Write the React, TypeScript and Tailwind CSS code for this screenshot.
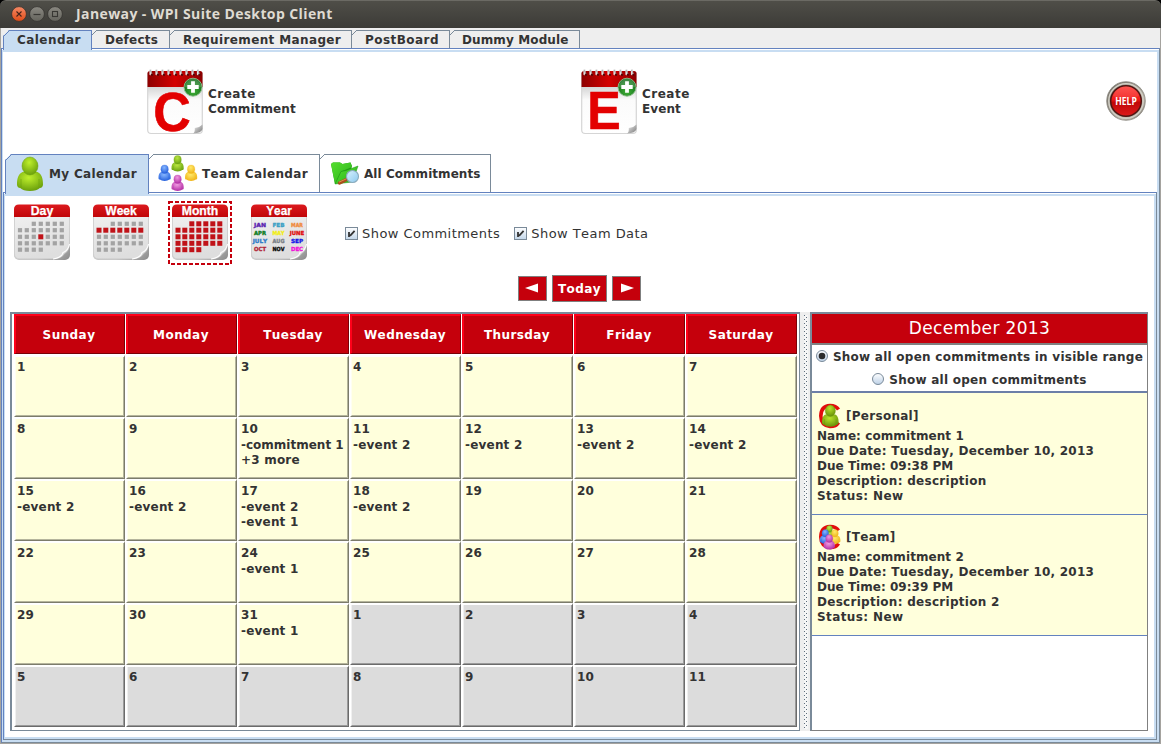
import React from "react";

const days = ["Sunday", "Monday", "Tuesday", "Wednesday", "Thursday", "Friday", "Saturday"];

const events: Record<number, string[]> = {
  9: ["-commitment 1", "+3 more"],
  10: ["-event 2"],
  11: ["-event 2"],
  12: ["-event 2"],
  13: ["-event 2"],
  14: ["-event 2"],
  15: ["-event 2"],
  16: ["-event 2", "-event 1"],
  17: ["-event 2"],
  23: ["-event 1"],
  30: ["-event 1"],
};

const cells = Array.from({ length: 42 }, (_, i) => ({
  label: i < 31 ? i + 1 : i - 30,
  current: i < 31,
  lines: events[i] ?? [],
}));

function WindowButton({ kind }: { kind: "close" | "min" | "max" }) {
  const close = kind === "close";
  return (
    <svg width="16" height="16" viewBox="0 0 16 16">
      <defs>
        <linearGradient id={"wb" + kind} x1="0" y1="0" x2="0" y2="1">
          <stop offset="0" stopColor={close ? "#f58a66" : "#8a8881"} />
          <stop offset="1" stopColor={close ? "#df4b17" : "#64635c"} />
        </linearGradient>
      </defs>
      <circle cx="8" cy="8" r="7.4" fill={`url(#wb${kind})`} stroke="#33322e" strokeWidth="0.8" />
      {kind === "close" && <path d="M5.500 5.500l5 5M10.500 5.500l-5 5" stroke="#45231a" strokeWidth="1.100" />}
      {kind === "min" && <path d="M4.500 8.500h7" stroke="#383733" strokeWidth="1.200" />}
      {kind === "max" && <rect x="5.500" y="5.500" width="5" height="5" fill="none" stroke="#383733" strokeWidth="1.100" />}
    </svg>
  );
}

function CreateIcon({ letter }: { letter: string }) {
  const id = "ci" + letter;
  return (
    <svg width="56" height="66" viewBox="0 0 56 66" className="overflow-visible">
      <defs>
        <linearGradient id={id + "r"} x1="0" x2="1">
          <stop offset="0" stopColor="#8d0000" />
          <stop offset="0.5" stopColor="#d40000" />
          <stop offset="1" stopColor="#8d0000" />
        </linearGradient>
        <linearGradient id={id + "w"} x1="0" y1="0" x2="0" y2="1">
          <stop offset="0.2" stopColor="#d0d0d0" />
          <stop offset="0.45" stopColor="#fbfbfb" />
          <stop offset="1" stopColor="#ffffff" />
        </linearGradient>
        <linearGradient id={id + "c"} x1="0" y1="0" x2="1" y2="1">
          <stop offset="0" stopColor="#ffffff" />
          <stop offset="0.5" stopColor="#b5b5b5" />
          <stop offset="1" stopColor="#777" />
        </linearGradient>
        <radialGradient id={id + "g"} cx="0.5" cy="0.75" r="0.7">
          <stop offset="0" stopColor="#3fae35" />
          <stop offset="1" stopColor="#106a1a" />
        </radialGradient>
      </defs>
      <path d="M0.700 4H55.300V61q0 3.500-3.500 3.500H4.200q-3.500 0-3.500-3.500z" fill={`url(#${id}w)`} stroke="#d5d5d5" strokeWidth="1.200" />
      <path d="M0.500 18V4.500q0-2.500 2.500-2.500H53q2.500 0 2.500 2.500V18z" fill={`url(#${id}r)`} />
      {[4, 10, 16, 22, 28, 34, 40, 46, 51.500].map((x) => (
        <g key={x}>
          <path d={`M${x - 0.500} 1.200v4`} stroke="#e2e2e2" strokeWidth="2.200" strokeLinecap="round" />
          <circle cx={x + 1} cy="5.700" r="1.200" fill="#5c0808" />
          <path d={`M${x - 1} 1l2 4`} stroke="#9a9a9a" strokeWidth="0.800" />
        </g>
      ))}
      <path d="M46 64.500q2-1 1.800-5.500q5-.5 7.700-3.500V60q-1 4-9.500 4.500z" fill={`url(#${id}c)`} />
      <text
        x={letter === "C" ? 25 : 23}
        y={letter === "C" ? 61.5 : 60}
        textAnchor="middle"
        fontFamily="Liberation Sans, sans-serif"
        fontWeight="700"
        fontSize={letter === "C" ? 56 : 54}
        textLength={letter === "C" ? 37.5 : 33.5}
        lengthAdjust="spacingAndGlyphs"
        fill="#e30000"
        stroke="#e30000"
        strokeWidth="0.600"
      >
        {letter}
      </text>
      <circle cx="46" cy="18.200" r="9" fill={`url(#${id}g)`} stroke="#8fbd8c" strokeWidth="0.900" />
      <path d="M37.800 18a8.200 8.200 0 0 1 16.400 0q-8 2-16.400 0z" fill="#fff" opacity="0.180" />
      <path d="M46 12.300v11.400M40.300 18h11.400" stroke="#fff" strokeWidth="3.800" />
    </svg>
  );
}

function HelpIcon() {
  return (
    <svg width="40" height="40" viewBox="0 0 40 40">
      <defs>
        <linearGradient id="hm" x1="0" y1="0" x2="1" y2="1">
          <stop offset="0" stopColor="#69665f" />
          <stop offset="0.350" stopColor="#8d897f" />
          <stop offset="0.700" stopColor="#b9b5aa" />
          <stop offset="1" stopColor="#77736c" />
        </linearGradient>
        <linearGradient id="hr" x1="0" y1="0" x2="0" y2="1">
          <stop offset="0" stopColor="#ff4a44" />
          <stop offset="0.450" stopColor="#ee1a18" />
          <stop offset="0.550" stopColor="#c00808" />
          <stop offset="1" stopColor="#dd1b1b" />
        </linearGradient>
      </defs>
      <circle cx="20" cy="20" r="19.300" fill="url(#hm)" stroke="#8c8880" strokeWidth="0.800" />
      <circle cx="20" cy="20" r="17.200" fill="none" stroke="#d2cfc5" strokeWidth="1.500" />
      <circle cx="20" cy="20" r="15.300" fill="url(#hr)" stroke="#4f1512" strokeWidth="1.500" />
      <path d="M7 15a13.500 13.500 0 0 1 26 0q-13 6-26 0z" fill="#ff7777" opacity="0.250" />
      <text x="20" y="24" textAnchor="middle" fontFamily="Open Sans, sans-serif" fontWeight="700" fontSize="10" textLength="21.500" lengthAdjust="spacingAndGlyphs" fill="#fff">
        HELP
      </text>
    </svg>
  );
}

function PersonShape({ x, y, s, light, dark, id }: { x: number; y: number; s: number; light: string; dark: string; id: string }) {
  return (
    <g transform={`translate(${x} ${y}) scale(${s})`}>
      <defs>
        <radialGradient id={id} cx="0.45" cy="0.3" r="0.7">
          <stop offset="0" stopColor={light} />
          <stop offset="1" stopColor={dark} />
        </radialGradient>
      </defs>
      <path d="M5.500 15C1 17 0 22 0 27.500c0 2 1.200 3.300 3.200 3.500C5 33 8.500 34 13 34s8-1 9.800-3c2-.2 3.200-1.500 3.200-3.500C26 22 25 17 20.500 15z" fill={`url(#${id})`} />
      <path d="M4 22v8.500M22 22v8.500" stroke={dark} strokeWidth="0.800" opacity="0.700" />
      <ellipse cx="13" cy="9" rx="8" ry="9" fill={`url(#${id})`} stroke={dark} strokeWidth="0.500" />
    </g>
  );
}

function MyIcon() {
  return (
    <svg width="28" height="36" viewBox="0 0 28 36" className="-mt-px">
      <PersonShape id="me" x={1} y={1} s={1} light="#bff02c" dark="#6ba00c" />
    </svg>
  );
}

function TeamIcon() {
  return (
    <svg width="40" height="38" viewBox="0 0 40 38" className="-mt-px">
      <PersonShape id="tg" x={13.500} y={1.500} s={0.47} light="#b9e640" dark="#6aa212" />
      <PersonShape id="tb" x={0.500} y={11} s={0.47} light="#86b6ff" dark="#2560dc" />
      <PersonShape id="ty" x={27} y={11} s={0.47} light="#ffe96a" dark="#f0b418" />
      <PersonShape id="tp" x={13.500} y={21} s={0.47} light="#f09ae0" dark="#b32fa6" />
    </svg>
  );
}

function FolderIcon() {
  return (
    <svg width="30" height="26" viewBox="0 0 30 26">
      <defs>
        <linearGradient id="fg" x1="0" y1="0" x2="1" y2="1">
          <stop offset="0" stopColor="#55df2e" />
          <stop offset="1" stopColor="#2bb01c" />
        </linearGradient>
        <linearGradient id="fl" x1="0" y1="0" x2="1" y2="1">
          <stop offset="0" stopColor="#d9f2ff" />
          <stop offset="1" stopColor="#8cc9ee" />
        </linearGradient>
      </defs>
      <path d="M1 3l2-1.500h7L12.500 3l8-1.500L22 5l-3 12L5 23z" fill="#239f16" />
      <path d="M1 3l2-1.500h7L12.500 3l8-1.500L22 6 11 10.500 5 23z" fill="url(#fg)" />
      <path d="M11 10.500l5-1L28 5l-5.500 16-17.500 2z" fill="url(#fg)" stroke="#1b9414" strokeWidth="0.500" />
      <path d="M9.500 22l7-3.500" stroke="#a94e1c" strokeWidth="3.400" strokeLinecap="round" />
      <path d="M9 21.200l7-3.200" stroke="#e38a4c" strokeWidth="1" />
      <circle cx="22.500" cy="15.500" r="6" fill="url(#fl)" stroke="#8babbd" strokeWidth="1.100" />
    </svg>
  );
}

const colX = [6, 12.8, 19.8, 26.8, 33.8, 40.8, 47.8];
const rowY = [19.8, 26.2, 32.8, 39.3, 45.7];

const months: [string, string][] = [
  ["JAN", "#5a1fb0"], ["FEB", "#3b9fc4"], ["MAR", "#f08a3c"],
  ["APR", "#0a7a1c"], ["MAY", "#f2ee10"], ["JUNE", "#e01010"],
  ["JULY", "#2f7cc8"], ["AUG", "#7b7f86"], ["SEP", "#1212e8"],
  ["OCT", "#b02436"], ["NOV", "#080808"], ["DEC", "#f012d8"],
];

function ViewIcon({ label }: { label: "Day" | "Week" | "Month" | "Year" }) {
  const id = "vi" + label;
  const isRed = (r: number, c: number) =>
    label === "Month" || (label === "Week" && r === 1) || (label === "Day" && r === 2 && c === 3);
  return (
    <svg width="56" height="57" viewBox="0 0 56 57">
      <defs>
        <linearGradient id={id} x1="0" y1="0" x2="0.300" y2="1">
          <stop offset="0" stopColor="#f0f0f0" />
          <stop offset="1" stopColor="#dedede" />
        </linearGradient>
        <linearGradient id={id + "r"} x1="0" y1="0" x2="0" y2="1">
          <stop offset="0" stopColor="#dc1a1e" />
          <stop offset="1" stopColor="#c00508" />
        </linearGradient>
        <linearGradient id={id + "s"} x1="0.700" y1="0.700" x2="1" y2="1">
          <stop offset="0" stopColor="#c6c6c6" />
          <stop offset="1" stopColor="#8a8a8a" />
        </linearGradient>
      </defs>
      <rect x="0" y="1" width="56" height="55" rx="5" fill={`url(#${id}s)`} />
      <path d="M0.500 10H55.500V41Q54.500 47.500 50.500 49.500Q48 54 41 54.800H5.500Q.5 54.500 .5 50z" fill={`url(#${id})`} stroke="#cfcfcf" strokeWidth="0.700" />
      <path d="M39 55Q48 53.500 49 48.500Q54 47 55.500 40" fill="none" stroke="#fff" strokeWidth="1.100" />
      <path d="M0 13V5.500Q0 .5 5 .5H51q5 0 5 5V13z" fill={`url(#${id}r)`} />
      <text x="28" y="10.600" textAnchor="middle" fontFamily="Liberation Sans, sans-serif" fontWeight="700" fontSize="12" fill="#fff" stroke="#fff" strokeWidth="0.250"
        textLength={label === "Month" ? 36.5 : label === "Week" ? 31.5 : label === "Year" ? 25.5 : 22.5} lengthAdjust="spacingAndGlyphs">
        {label}
      </text>
      {label !== "Year" &&
        rowY.map((y, r) =>
          colX.map((x, c) => {
            if ((r === 0 && c < 2) || (r === 4 && c > 3)) return null;
            const red = isRed(r, c);
            const w = red ? 5 : 4.2;
            return (
              <rect key={`${r}-${c}`} x={x - w / 2} y={y - w / 2} width={w} height={w} fill={red ? "#c01218" : "#a3a3a3"} />
            );
          })
        )}
      {label === "Year" &&
        months.map(([m, color], i) => (
          <text
            key={m}
            x={[9, 27.5, 46][i % 3]}
            y={[22.8, 30.8, 38.6, 46.6][Math.floor(i / 3)]}
            textAnchor="middle"
            fontFamily="DejaVu Sans, sans-serif"
            fontWeight="700"
            fontSize="5.600"
            textLength={m.length > 3 ? 14.5 : 12}
            lengthAdjust="spacingAndGlyphs"
            fill={color}
            stroke={color}
            strokeWidth="0.350"
          >
            {m}
          </text>
        ))}
    </svg>
  );
}

function ItemIcon({ team }: { team: boolean }) {
  return (
    <svg width="23" height="26" viewBox="0 0 23 26" className="-mt-px">
      <path d="M20.500 6.500Q18 2.500 12 2.500Q3 3 2.800 13Q3 22.500 12 23.500Q18 23.500 20.500 19.500" fill="none" stroke="#e30c0c" strokeWidth="3.600" />
      {team ? (
        <>
          <PersonShape id="sg" x={6.500} y={1.500} s={0.38} light="#c0ea4a" dark="#6aa212" />
          <PersonShape id="sb" x={1.800} y={5.500} s={0.42} light="#86b6ff" dark="#2560dc" />
          <PersonShape id="sy" x={11.500} y={5.500} s={0.42} light="#ffe96a" dark="#f0b418" />
          <PersonShape id="sp" x={5.500} y={10.500} s={0.44} light="#f09ae0" dark="#b32fa6" />
        </>
      ) : (
        <PersonShape id="sm" x={4} y={2} s={0.64} light="#b9e32a" dark="#668f08" />
      )}
    </svg>
  );
}

function Tab({ selected, inner, className, children }: { selected?: boolean; inner?: boolean; className: string; children: React.ReactNode }) {
  const line = selected ? "#6382bf" : "#7a8a99";
  const fill = selected ? "z-10 -mb-[2px] border-l bg-[#c8ddf2] pb-px" : inner ? "bg-white" : "bg-[#eeeeee]";
  return (
    <div className={`relative flex items-center border-t border-r whitespace-nowrap ${fill} ${selected ? "border-[#6382bf]" : "border-[#7a8a99]"} ${className}`}>
      <svg className={`absolute -top-px ${selected ? "-left-px" : "left-0"}`} width="8" height="8" viewBox="0 0 8 8">
        <path d={selected ? "M0 0H6L0 6z" : "M0 0H5L0 5z"} fill={inner ? "#fff" : "#eee"} />
        <path d={selected ? "M0.500 6.500L6.500 0.500" : "M-0.500 5.500L5 0"} stroke={line} strokeWidth="1" />
      </svg>
      {children}
    </div>
  );
}

function CheckBox({ label }: { label: string }) {
  return (
    <div className="flex items-center gap-1 text-[13px] leading-4 font-normal tracking-[0.45px]">
      <svg width="13" height="13" viewBox="0 0 13 13" className="-mt-[2px]">
        <defs>
          <linearGradient id="cb" x1="0" y1="0" x2="0" y2="1">
            <stop offset="0" stopColor="#fff" />
            <stop offset="1" stopColor="#c2d6ea" />
          </linearGradient>
        </defs>
        <rect x="0.500" y="0.500" width="12" height="12" fill="url(#cb)" stroke="#7a8a99" />
        <path d="M4 5v5M5 8.800L9.600 3.800" stroke="#333" strokeWidth="1.800" fill="none" />
      </svg>
      <span>{label}</span>
    </div>
  );
}

function Radio({ on }: { on?: boolean }) {
  return (
    <svg className="-mt-[2px]" width="12" height="12" viewBox="0 0 12 12">
      <defs>
        <linearGradient id="rd" x1="0" y1="0" x2="0" y2="1">
          <stop offset="0" stopColor="#fff" />
          <stop offset="1" stopColor="#bcd0e6" />
        </linearGradient>
      </defs>
      <circle cx="6" cy="6" r="5.500" fill="url(#rd)" stroke="#7a8a99" />
      {on && <circle cx="6" cy="6" r="3.300" fill="#2b2b2b" />}
    </svg>
  );
}

function Commitment({ team, kind, name, time, description }: { team: boolean; kind: string; name: string; time: string; description: string }) {
  return (
    <div className={`border-b border-[#6382bf] bg-[#ffffdc] pl-[5px] whitespace-nowrap ${team ? "h-[121px] pt-[9px]" : "h-[122px] pt-[10px]"}`}>
      <div className="flex h-[26px] items-center gap-[5px] pl-px">
        <ItemIcon team={team} />
        <span className="tracking-[0.28px]">{kind}</span>
      </div>
      <div className="tracking-[0.08px]">Name: {name}</div>
      <div className="tracking-[0.24px]">Due Date: Tuesday, December 10, 2013</div>
      <div className="tracking-[0.02px]">Due Time: {time}</div>
      <div className="tracking-[0.28px]">Description: {description}</div>
      <div className="tracking-[0.4px]">Status: New</div>
    </div>
  );
}

export default function App() {
  return (
    <div className="flex h-[744px] w-[1161px] flex-col overflow-hidden bg-[#a5a39f] font-['DejaVu_Sans',sans-serif] text-[12px] leading-[15px] font-bold text-[#333333] [font-kerning:none]">
      <div className="bg-black">
        <header className="flex h-7 items-center rounded-t-md border-t border-[#6b6a64] bg-linear-to-b from-[#4f4e48] to-[#3c3b37] pl-[11px]">
          <div className="-mt-px flex gap-[2px]">
            <WindowButton kind="close" />
            <WindowButton kind="min" />
            <WindowButton kind="max" />
          </div>
          <span className="-mt-[2px] ml-[13px] font-['Open_Sans','Noto_Sans',sans-serif] text-[14px] leading-5 tracking-[0.4px] text-[#dfdbd2]">Janeway - WPI Suite Desktop Client</span>
        </header>
      </div>

      <div className="flex flex-1 flex-col px-px pb-px">
        <nav className="flex h-5 items-end bg-[#eeeeee] pl-[2px]">
          <Tab selected className="h-5 w-[89px] pl-[13px] tracking-[0.45px]">Calendar</Tab>
          <Tab className="h-[18px] w-[78px] pt-px pl-[13px] tracking-[0.25px]">Defects</Tab>
          <Tab className="h-[18px] w-[182px] pt-px pl-[13px] tracking-[0.37px]">Requirement Manager</Tab>
          <Tab className="h-[18px] w-[98px] pt-px pl-[13px] tracking-[0.45px]">PostBoard</Tab>
          <Tab className="h-[18px] w-[130px] pt-px pl-[12px] tracking-[0.12px]">Dummy Module</Tab>
        </nav>

        <div className="flex flex-1 flex-col border border-t-[#6382bf] border-r-[#7a8a99] border-b-[#7a8a99] border-l-[#6382bf] bg-white pt-px">
          <div className="flex flex-1 flex-col border-t-2 border-r-2 border-b-2 border-l border-[#c8ddf2]">
            <div className="flex h-[102px] items-start pt-[17px]">
              <div className="flex w-[434px] items-center gap-[5px] pl-[144px]">
                <CreateIcon letter="C" />
                <div><div className="tracking-[0.5px]">Create</div><div className="tracking-[0.1px]">Commitment</div></div>
              </div>
              <div className="flex w-[300px] items-center gap-[5px] pl-[144px]">
                <CreateIcon letter="E" />
                <div><div className="tracking-[0.5px]">Create</div><div className="tracking-[0.1px]">Event</div></div>
              </div>
              <div className="mt-3 mr-[11px] ml-auto"><HelpIcon /></div>
            </div>

            <nav className="flex h-[38px] items-end pl-[2px]">
              <Tab selected inner className="h-10 w-[144px] gap-[5px] pl-[10px] tracking-[0.33px]"><MyIcon /><span className="pt-px">My Calendar</span></Tab>
              <Tab inner className="h-[38px] w-[171px] gap-1 pl-[9px] tracking-[0.35px]"><TeamIcon /><span className="pt-[2px]">Team Calendar</span></Tab>
              <Tab inner className="h-[38px] w-[171px] gap-1 pl-[10px] tracking-[0.05px]"><FolderIcon /><span className="pt-[2px]">All Commitments</span></Tab>
            </nav>

            <div className="flex flex-1 flex-col border border-t-[#6382bf] border-r-[#7a8a99] border-b-[#7a8a99] border-l-[#6382bf] pt-px">
              <main className="flex flex-1 flex-col border-t-2 border-r-2 border-b-2 border-l border-[#c8ddf2] bg-white">
                <div className="flex h-[79px] items-start pt-2 pl-[9px]">
                  <div className="flex gap-[23px]">
                    <ViewIcon label="Day" />
                    <ViewIcon label="Week" />
                    <div className="relative">
                      <ViewIcon label="Month" />
                      <svg className="absolute -top-[3px] -left-1" width="64" height="64" viewBox="0 0 64 64">
                        <rect x="1" y="1" width="62" height="62" fill="none" stroke="#c5000c" strokeWidth="2" strokeDasharray="4 2" />
                      </svg>
                    </div>
                    <ViewIcon label="Year" />
                  </div>
                  <div className="mt-[22px] ml-[38px] flex gap-[14px]">
                    <CheckBox label="Show Commitments" />
                    <CheckBox label="Show Team Data" />
                  </div>
                </div>

                <div className="flex h-[26px] items-center justify-center gap-[5px] text-white">
                  <button className="flex h-[25px] w-[29px] items-center justify-center border border-[#7f7f7f] bg-[#c5000c]">
                    <svg width="13" height="10" viewBox="0 0 13 10" className="-ml-[2px]"><path d="M0 5L13 0.500V9.500z" fill="#fff" /></svg>
                  </button>
                  <button className="h-[27px] w-[55px] border border-[#7f7f7f] bg-[#c5000c] pt-[2px] tracking-[0.4px]">Today</button>
                  <button className="flex h-[25px] w-[29px] items-center justify-center border border-[#7f7f7f] bg-[#c5000c]">
                    <svg width="13" height="10" viewBox="0 0 13 10" className="-mr-[2px]"><path d="M13 5L0 0.500V9.500z" fill="#fff" /></svg>
                  </button>
                </div>

                <div className="mt-[11px] flex h-[419px] pl-[5px]">
                  <section className="flex w-[790px] flex-col border-t-2 border-b border-l-2 border-[#7a8a99] bg-white">
                    <div className="flex flex-1 border-r border-[#7a8a99] pl-[2px]">
                      <div className="grid h-[414px] w-[784px] grid-cols-[repeat(7,112px)] grid-rows-[41px_repeat(6,62px)]">
                        {days.map((d) => (
                          <div key={d} className="mr-px mb-px flex items-center justify-center border-t-2 border-r border-b border-l-2 border-t-[#ff0019] border-r-[#7a0007] border-b-[#7a0007] border-l-[#ff0019] bg-[#c5000c] pt-[2px] pr-[2px] tracking-[0.42px] text-white">
                            {d}
                          </div>
                        ))}
                        {cells.map((c, i) => (
                          <div key={i} className={`mr-px border-t-2 border-r border-b border-l border-white ${c.current ? "border-r-[#7c7c6b] border-b-[#7c7c6b]" : "border-r-[#6b6b6b] border-b-[#6b6b6b]"}`}>
                            <div className={`h-full border-r border-b border-l pt-[3px] pl-px whitespace-nowrap ${c.current ? "border-r-[#b5b59c] border-b-[#b5b59c] border-l-[#fffff0] bg-[#ffffdc]" : "border-r-[#9a9a9a] border-b-[#9a9a9a] border-l-[#f0f0f0] bg-[#dcdcdc]"}`}>
                              <div className="h-4 tracking-[0.1px]">{c.label}</div>
                              {c.lines.map((l) => (
                                <div key={l} className={l.length > 10 ? "tracking-[0px]" : "tracking-[0.2px]"}>{l}</div>
                              ))}
                            </div>
                          </div>
                        ))}
                      </div>
                    </div>
                  </section>

                  <div className="w-[10px] bg-[#eeeeee] pt-[3px] pr-[2px] pb-[2px] pl-[4px]">
                    <svg width="4" height="414">
                      <defs>
                        <pattern id="grip" width="4" height="4" patternUnits="userSpaceOnUse">
                          <rect width="4" height="4" fill="#f6f6f6" />
                          <rect x="0" y="0" width="1" height="1" fill="#5e6d7c" />
                          <rect x="2" y="2" width="1" height="1" fill="#5e6d7c" />
                        </pattern>
                      </defs>
                      <rect width="4" height="414" fill="url(#grip)" />
                    </svg>
                  </div>

                  <aside className="flex w-[338px] flex-col border-t-2 border-r border-b border-l-2 border-t-[#7a8a99] border-r-[#808080] border-b-[#808080] border-l-[#7a8a99] bg-white">
                    <div className="flex h-[31px] items-center justify-center border-b-2 border-[#808080] bg-[#c5000c] text-[17px] font-normal tracking-[0.35px] text-white">December 2013</div>
                    <div className="flex h-[48px] flex-col items-center border-b-2 border-[#6c7fa8] whitespace-nowrap">
                      <div className="flex h-[23px] items-center gap-[5px] pt-px tracking-[0.25px]"><Radio on />Show all open commitments in visible range</div>
                      <div className="flex h-[23px] items-center gap-[5px] pt-px tracking-[0.25px]"><Radio />Show all open commitments</div>
                    </div>
                    <Commitment team={false} kind="[Personal]" name="commitment 1" time="09:38 PM" description="description" />
                    <Commitment team kind="[Team]" name="commitment 2" time="09:39 PM" description="description 2" />
                  </aside>
                </div>
              </main>
            </div>
          </div>
        </div>
      </div>
    </div>
  );
}
